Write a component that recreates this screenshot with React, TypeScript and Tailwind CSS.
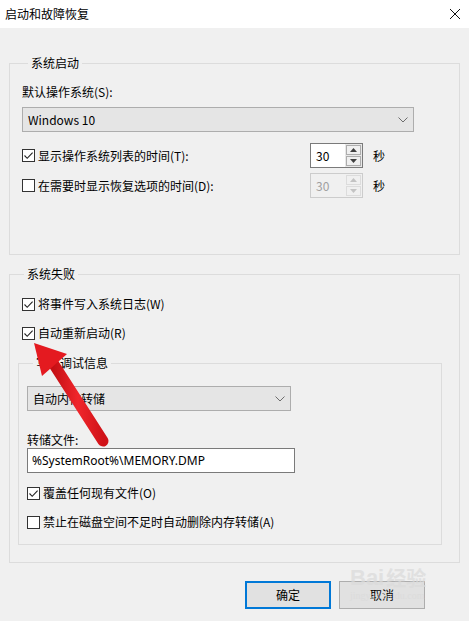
import React from 'react';

const font = { fontFamily: '"Noto Sans CJK SC", "Noto Sans", sans-serif' };

function Check({ checked }: { checked?: boolean }) {
  return (
    <span className="flex h-[13px] w-[13px] shrink-0 items-center justify-center border border-[#333] bg-white">
      {checked && (
        <svg width="11" height="11" viewBox="0 0 11 11">
          <path d="M1.5 5.5 L4.2 8.3 L9.6 2.6" fill="none" stroke="#222" strokeWidth="1.1" />
        </svg>
      )}
    </span>
  );
}

function CheckRow({ checked, label }: { checked?: boolean; label: string }) {
  return (
    <div className="flex h-[16px] items-center gap-[3px]">
      <Check checked={checked} />
      <span>{label}</span>
    </div>
  );
}

function Chevron() {
  return (
    <svg width="10" height="6" viewBox="0 0 10 6">
      <path d="M0.5 0.5 L5 5 L9.5 0.5" fill="none" stroke="#6d6d6d" strokeWidth="1" />
    </svg>
  );
}

function Select({ value, width }: { value: string; width: string }) {
  return (
    <div className={`flex h-[25px] items-center justify-between border border-[#adadad] bg-[#e5e5e5] pl-[5px] pr-[5px] ${width}`}>
      <span>{value}</span>
      <Chevron />
    </div>
  );
}

function Spin({ disabled }: { disabled?: boolean }) {
  const arrow = disabled ? '#c3c3c3' : '#404040';
  return (
    <div
      className={`flex h-[25px] w-[53px] border ${disabled ? 'border-[#cccccc] bg-[#f0f0f0] text-[#a0a0a0]' : 'border-[#7a7a7a] bg-white text-black'}`}
    >
      <div className="flex flex-1 items-center pl-[5px]">30</div>
      <div className={`flex w-[17px] flex-col gap-[1px] p-[1px] ${disabled ? 'bg-[#f0f0f0]' : 'bg-[#e8e8e8]'}`}>
        <div className={`flex flex-1 items-center justify-center border ${disabled ? 'border-[#dcdcdc]' : 'border-[#adadad]'} bg-[#f0f0f0]`}>
          <svg width="7" height="4" viewBox="0 0 7 4"><path d="M0 4 L3.5 0 L7 4 Z" fill={arrow} /></svg>
        </div>
        <div className={`flex flex-1 items-center justify-center border ${disabled ? 'border-[#dcdcdc]' : 'border-[#adadad]'} bg-[#f0f0f0]`}>
          <svg width="7" height="4" viewBox="0 0 7 4"><path d="M0 0 L3.5 4 L7 0 Z" fill={arrow} /></svg>
        </div>
      </div>
    </div>
  );
}

function Group({ title, className, children }: { title: string; className?: string; children: React.ReactNode }) {
  return (
    <fieldset className={`border border-[#dcdcdc] ${className ?? ''}`}>
      <legend className="ml-[6px] px-[3px] leading-[16px]">{title}</legend>
      {children}
    </fieldset>
  );
}

export default function App() {
  return (
    <div className="relative h-[621px] w-[469px] overflow-hidden bg-[#f0f0f0] text-[12px] leading-[16px] text-black" style={font}>
      <div className="flex h-[28px] items-center justify-between bg-white pl-[5px] pr-[8px]">
        <span className="text-[12px]">启动和故障恢复</span>
        <svg width="12" height="12" viewBox="0 0 12 12">
          <path d="M1 1 L11 11 M11 1 L1 11" stroke="#111" strokeWidth="1" />
        </svg>
      </div>

      <div className="px-[9px] pt-[27px]">
        <Group title="系统启动" className="h-[200px] pl-[12px]">
          <div className="mt-[13px]">默认操作系统(S):</div>
          <div className="mt-[7px]">
            <Select value="Windows 10" width="w-[392px]" />
          </div>
          <div className="mt-[11px] flex h-[25px] items-center">
            <div className="w-[288px]"><CheckRow checked label="显示操作系统列表的时间(T):" /></div>
            <Spin />
            <span className="ml-[10px]">秒</span>
          </div>
          <div className="mt-[5px] flex h-[25px] items-center">
            <div className="w-[288px]"><CheckRow label="在需要时显示恢复选项的时间(D):" /></div>
            <Spin disabled />
            <span className="ml-[10px]">秒</span>
          </div>
        </Group>

        <Group title="系统失败" className="mt-[11px] pb-[17px] pl-[8px] pr-[17px]">
          <div className="ml-[4px] mt-[14px]"><CheckRow checked label="将事件写入系统日志(W)" /></div>
          <div className="ml-[4px] mt-[13px]"><CheckRow checked label="自动重新启动(R)" /></div>
          <Group title="写入调试信息" className="mt-[14px] pb-[14px] pl-[8px]">
            <div className="mt-[15px]">
              <Select value="自动内存转储" width="w-[264px]" />
            </div>
            <div className="mt-[21px]">转储文件:</div>
            <div className="flex h-[25px] w-[268px] items-center border border-[#7a7a7a] bg-white pl-[4px]" style={{ fontFamily: '"Noto Sans", sans-serif' }}>
              %SystemRoot%\MEMORY.DMP
            </div>
            <div className="mt-[12px]"><CheckRow checked label="覆盖任何现有文件(O)" /></div>
            <div className="mt-[13px]"><CheckRow label="禁止在磁盘空间不足时自动删除内存转储(A)" /></div>
          </Group>
        </Group>

        <div className="mt-[18px] flex justify-end gap-[8px] pr-[35px]">
          <button className="h-[28px] w-[86px] border-2 border-[#0078d7] bg-[#e1e1e1]">确定</button>
          <button className="h-[28px] w-[86px] border border-[#adadad] bg-[#e1e1e1]">取消</button>
        </div>
      </div>

      {/* 百度经验水印 */}
      <div className="pointer-events-none absolute left-[350px] top-[566px] flex flex-col items-start text-[#dadada] opacity-70">
        <div className="flex items-end gap-[2px] text-[22px] font-bold leading-[24px]" style={{ fontFamily: '"Liberation Sans", sans-serif' }}>
          <span>Bai</span>
          <span className="text-[20px]" style={font}>经验</span>
        </div>
        <span className="text-[10px] leading-[12px]" style={{ fontFamily: '"Liberation Serif", serif' }}>jingyan.baidu.com</span>
      </div>

      {/* red arrow */}
      <svg className="pointer-events-none absolute left-0 top-0" width="469" height="621" viewBox="0 0 469 621">
        <defs>
          <linearGradient id="ar" x1="0" y1="0" x2="1" y2="0">
            <stop offset="0" stopColor="#c40f14" />
            <stop offset="0.5" stopColor="#f0262b" />
            <stop offset="1" stopColor="#d01218" />
          </linearGradient>
        </defs>
        <path d="M53 363 L103 441" stroke="url(#ar)" strokeWidth="11" strokeLinecap="round" />
        <path d="M34 343 L42 376 L67 354 Z" fill="#e41a20" />
      </svg>
    </div>
  );
}
